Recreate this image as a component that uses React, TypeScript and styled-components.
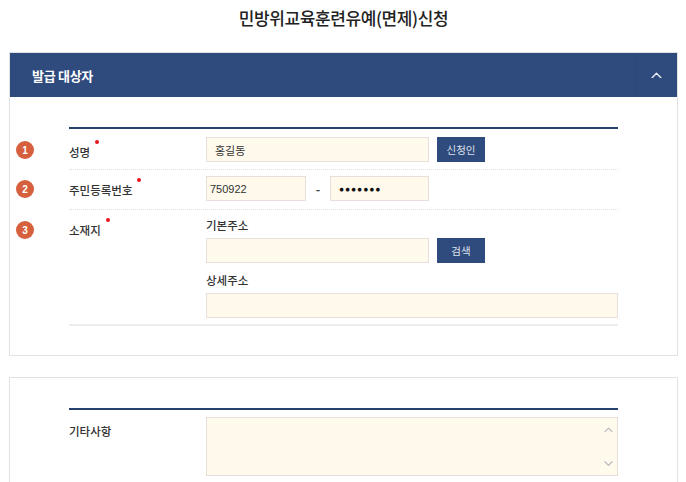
import React from "react";
import styled, { createGlobalStyle } from "styled-components";

const Global = createGlobalStyle`
  html, body { margin: 0; padding: 0; background: #fff; }
  body { font-family: "Noto Sans CJK KR", "Noto Sans", sans-serif; color: #333; }
  * { box-sizing: border-box; }
`;

const Page = styled.div`
  width: 686px;
  padding: 0 8px 0 9px;
`;

const Title = styled.h1`
  margin: 0;
  height: 52px;
  padding-top: 5px;
  text-align: center;
  font-size: 17px;
  font-weight: 500;
  letter-spacing: -0.4px;
  color: #222;
`;

const Panel = styled.section<{ $gap?: number }>`
  border: 1px solid #e2e2e2;
  margin-top: ${(p) => p.$gap ?? 0}px;
  background: #fff;
`;

const Header = styled.div`
  height: 44px;
  background: #2f4a7c;
  display: flex;
  align-items: center;
  justify-content: space-between;
  padding-left: 22px;
`;

const HeaderTitle = styled.h2`
  margin: 0;
  font-size: 13px;
  font-weight: 700;
  color: #fff;
  letter-spacing: -0.3px;
`;

const Toggle = styled.button`
  width: 42px;
  height: 44px;
  border: 0;
  border-left: 1px solid #2c4677;
  background: transparent;
  display: flex;
  align-items: center;
  justify-content: center;
  padding: 0;
  cursor: pointer;
`;

const Body = styled.div<{ $top: number; $bottom: number }>`
  padding: ${(p) => p.$top}px 59px ${(p) => p.$bottom}px 59px;
`;

const Table = styled.div`
  border-top: 2px solid #27406d;
`;

const Row = styled.div<{ $last?: boolean; $plain?: boolean; $pt: number; $pb: number }>`
  position: relative;
  display: grid;
  grid-template-columns: 137px 1fr;
  padding: ${(p) => p.$pt}px 0 ${(p) => p.$pb}px;
  border-bottom: ${(p) =>
    p.$plain ? "0" : p.$last ? "2px solid #ececf1" : "1px dotted #dcdce2"};
`;

const Badge = styled.span<{ $top: number }>`
  position: absolute;
  left: -53px;
  top: ${(p) => p.$top}px;
  width: 18px;
  height: 18px;
  border-radius: 50%;
  background: #d6603e;
  color: #fff;
  font-family: "Liberation Sans", Arial, sans-serif;
  font-size: 10px;
  font-weight: 700;
  display: flex;
  align-items: center;
  justify-content: center;
`;

const Label = styled.div<{ $pt: number; $req?: boolean }>`
  padding-top: ${(p) => p.$pt}px;
  font-size: 11.5px;
  font-weight: 500;
  color: #333;
  span {
    position: relative;
  }
  span::after {
    content: "";
    display: ${(p) => (p.$req ? "block" : "none")};
    position: absolute;
    right: -9px;
    top: -4px;
    width: 4px;
    height: 4px;
    border-radius: 50%;
    background: #e8141c;
  }
`;

const Field = styled.div`
  display: flex;
  align-items: center;
  gap: 8px;
`;

const Stack = styled.div`
  display: flex;
  flex-direction: column;
`;

const SubLabel = styled.div<{ $mt?: number }>`
  font-size: 11.5px;
  font-weight: 500;
  color: #333;
  margin-top: ${(p) => p.$mt ?? 0}px;
  margin-bottom: 4px;
  line-height: 17px;
`;

const Input = styled.input<{ $w: number; $pl?: number; $mono?: boolean }>`
  width: ${(p) => p.$w}px;
  height: 25px;
  border: 1px solid #e8dfdc;
  background: #fffaec;
  padding: 0 0 0 ${(p) => p.$pl ?? 8}px;
  font-family: ${(p) =>
    p.$mono ? `"Liberation Sans", Arial, sans-serif` : `"Noto Sans CJK KR", sans-serif`};
  font-size: 11px;
  color: #333;
  outline: none;
`;

const Dots = styled(Input)`
  font-size: 8.5px;
  letter-spacing: 0.9px;
  color: #111;
`;

const Dash = styled.span`
  width: 8px;
  text-align: center;
  font-size: 12px;
  font-weight: 700;
  color: #444;
`;

const Button = styled.button`
  width: 48px;
  height: 25px;
  border: 0;
  background: #2f4a7c;
  color: #dfe3ec;
  font-family: "Noto Sans CJK KR", sans-serif;
  font-size: 10.5px;
  padding: 0;
  cursor: pointer;
`;

const AreaWrap = styled.div`
  position: relative;
  width: 412px;
  height: 59px;
`;

const Area = styled.textarea`
  width: 100%;
  height: 100%;
  border: 1px solid #e8dfdc;
  background: #fffaec;
  resize: none;
  outline: none;
  overflow: hidden;
  font-family: "Noto Sans CJK KR", sans-serif;
`;

const Scroll = styled.div`
  position: absolute;
  right: 5px;
  top: 10px;
  bottom: 10px;
  display: flex;
  flex-direction: column;
  justify-content: space-between;
  pointer-events: none;
`;

const Chevron = ({ up, color, w = 9 }: { up: boolean; color: string; w?: number }) => (
  <svg width={w} height={w * 0.6} viewBox="0 0 10 6" fill="none">
    <path
      d={up ? "M1 5.2 L5 1.2 L9 5.2" : "M1 0.8 L5 4.8 L9 0.8"}
      stroke={color}
      strokeWidth="1.3"
      strokeLinecap="round"
      strokeLinejoin="round"
    />
  </svg>
);

export default function App() {
  return (
    <Page>
      <Global />
      <Title>민방위교육훈련유예(면제)신청</Title>

      <Panel>
        <Header>
          <HeaderTitle>발급 대상자</HeaderTitle>
          <Toggle aria-label="접기">
            <Chevron up color="#e8ecf4" w={11} />
          </Toggle>
        </Header>
        <Body $top={30} $bottom={29}>
          <Table>
            <Row $pt={8} $pb={7}>
              <Badge $top={12}>1</Badge>
              <Label $pt={7} $req>
                <span>성명</span>
              </Label>
              <Field>
                <Input $w={223} $pl={8} defaultValue="홍길동" readOnly />
                <Button>신청인</Button>
              </Field>
            </Row>
            <Row $pt={6} $pb={8}>
              <Badge $top={10}>2</Badge>
              <Label $pt={6} $req>
                <span>주민등록번호</span>
              </Label>
              <Field>
                <Input $w={100} $pl={3} $mono defaultValue="750922" readOnly />
                <Dash>-</Dash>
                <Dots $w={99} $pl={8} $mono defaultValue="●●●●●●●" readOnly />
              </Field>
            </Row>
            <Row $last $pt={7} $pb={6}>
              <Badge $top={11}>3</Badge>
              <Label $pt={5} $req>
                <span>소재지</span>
              </Label>
              <Stack>
                <SubLabel>기본주소</SubLabel>
                <Field>
                  <Input $w={223} readOnly />
                  <Button>검색</Button>
                </Field>
                <SubLabel $mt={9}>상세주소</SubLabel>
                <Input $w={412} readOnly />
              </Stack>
            </Row>
          </Table>
        </Body>
      </Panel>

      <Panel $gap={21}>
        <Body $top={30} $bottom={30}>
          <Table>
            <Row $plain $pt={7} $pb={8}>
              <Label $pt={6}>
                <span>기타사항</span>
              </Label>
              <AreaWrap>
                <Area readOnly />
                <Scroll>
                  <Chevron up color="#b9b9c0" />
                  <Chevron up={false} color="#b9b9c0" />
                </Scroll>
              </AreaWrap>
            </Row>
          </Table>
        </Body>
      </Panel>
    </Page>
  );
}
